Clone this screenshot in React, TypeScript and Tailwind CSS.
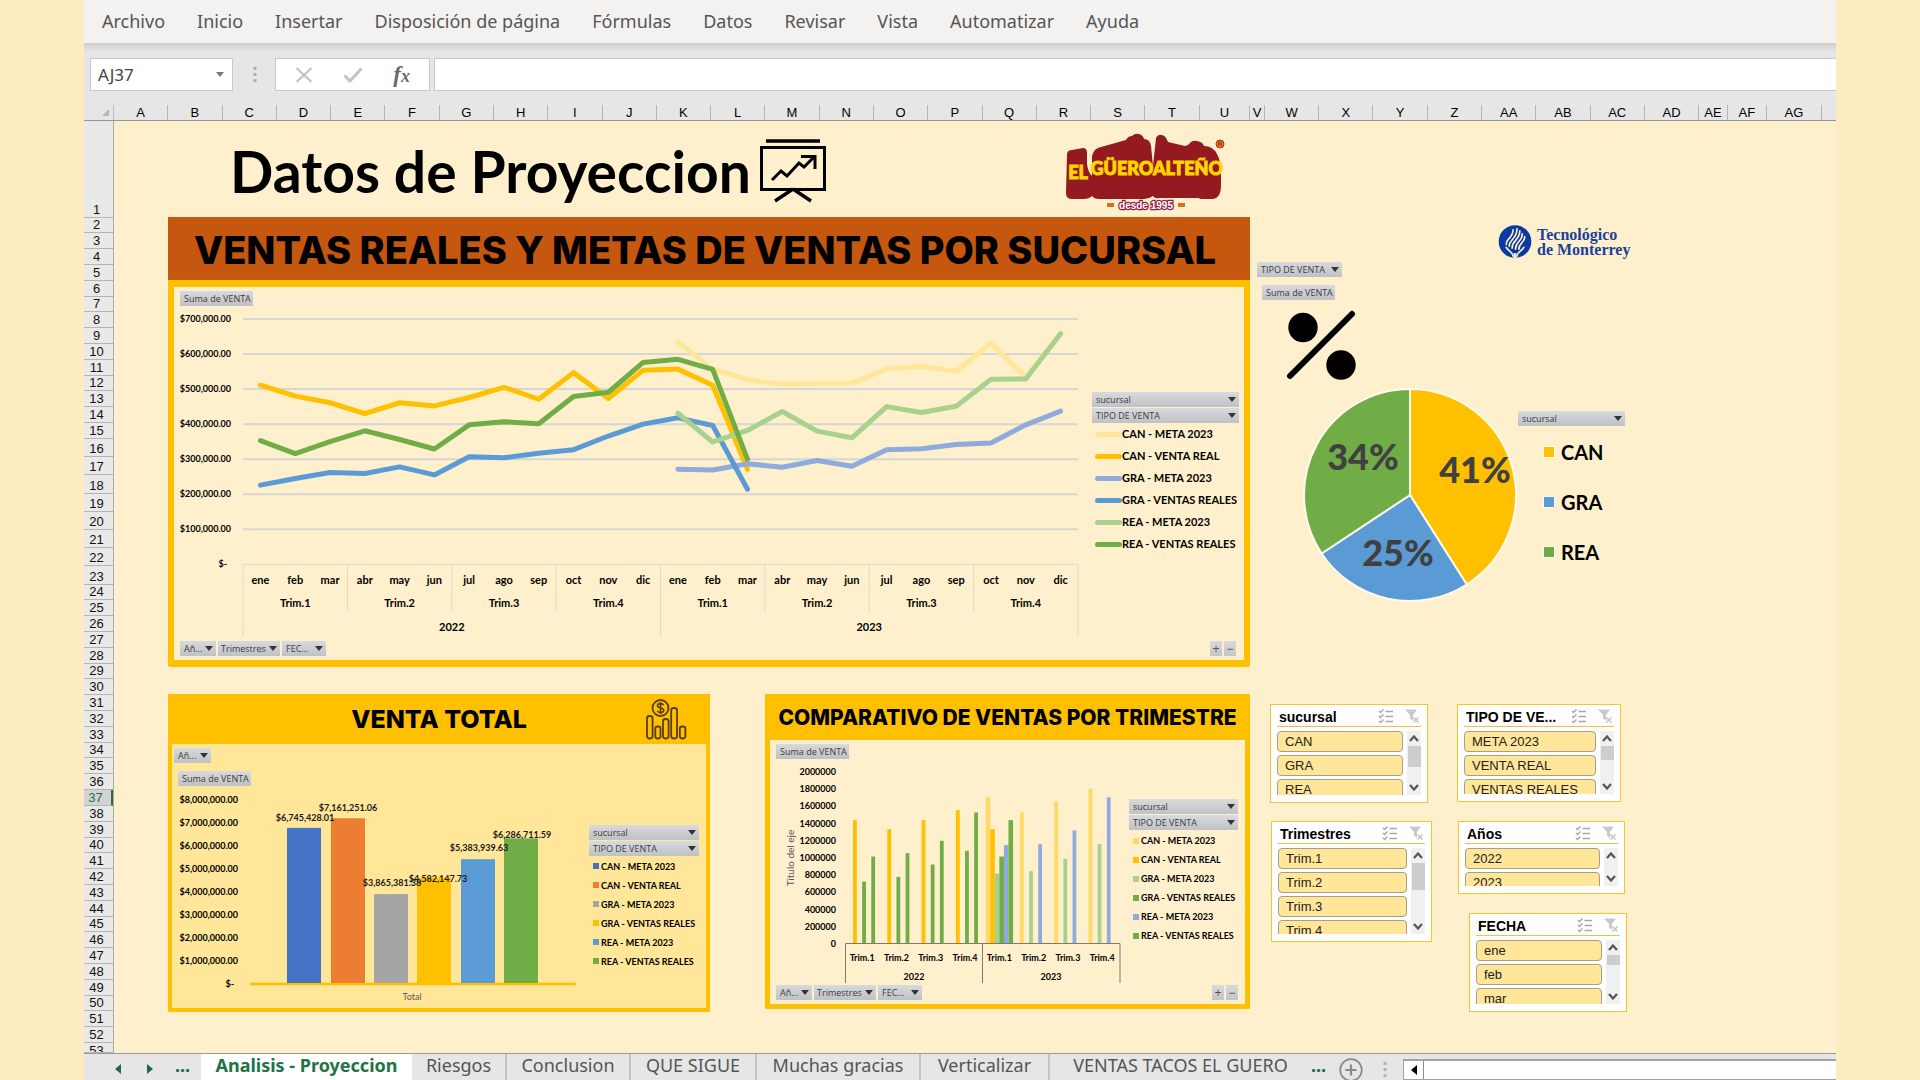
import React from "react";

const LATO = "font-['Lato','Open_Sans',sans-serif]";
const NOTO = "font-['Noto_Sans','Open_Sans',sans-serif]";
const ARIAL = "font-['Liberation_Sans',Arial,sans-serif]";
const HEAVY = "font-['Inter','Lato',sans-serif] font-extrabold";

const MENU = [
  "Archivo",
  "Inicio",
  "Insertar",
  "Disposición de página",
  "Fórmulas",
  "Datos",
  "Revisar",
  "Vista",
  "Automatizar",
  "Ayuda",
];

const LETTERS = "ABCDEFGHIJKLMNOPQRST".split("");
const COLUMNS: { name: string; size: string }[] = [
  ...LETTERS.map((name) => ({ name, size: "grow-[533]" })),
  { name: "U", size: "grow-[498]" },
  { name: "V", size: "grow-[135]" },
  ...["W", "X", "Y", "Z", "AA", "AB", "AC", "AD"].map((name) => ({ name, size: "grow-[533]" })),
  { name: "AE", size: "grow-[275]" },
  { name: "AF", size: "grow-[386]" },
  { name: "AG", size: "grow-[535]" },
];

function rowSize(n: number) {
  if (n === 1) return "grow-[955]";
  if (n === 53) return "grow-[90]";
  if (n >= 16 && n <= 23) return "grow-[172]";
  return "grow-[148]";
}

/* ---------- small shared parts ---------- */

function Caret({ className = "" }: { className?: string }) {
  return (
    <svg viewBox="0 0 8 5" className={`h-[5px] w-2 shrink-0 ${className}`} aria-hidden="true">
      <path d="M0 0h8L4 5z" fill="#333" />
    </svg>
  );
}

function FieldButton({ label, arrow = false, className = "" }: { label: string; arrow?: boolean; className?: string }) {
  return (
    <button
      type="button"
      className={`flex h-[15px] shrink-0 items-center justify-between bg-linear-to-b from-[#d9dade] to-[#bfc1c5] pr-[3px] pl-1 font-['Open_Sans','Noto_Sans',sans-serif] text-[9px] leading-none whitespace-nowrap text-[#3c3c3c] ${className}`}
    >
      <span>{label}</span>
      {arrow && <Caret />}
    </button>
  );
}

function ExpandButtons() {
  return (
    <div className="flex gap-[2px]">
      {["+", "−"].map((s) => (
        <button
          key={s}
          type="button"
          aria-label={s === "+" ? "Expandir campo" : "Contraer campo"}
          className={`flex h-[15px] w-3 items-center justify-center bg-linear-to-b from-[#d9dade] to-[#c3c5c9] text-[12px] leading-none text-[#555] ${ARIAL}`}
        >
          {s}
        </button>
      ))}
    </div>
  );
}

function AxisButtons() {
  return (
    <div className="flex gap-[2px]">
      <FieldButton label="Añ..." arrow className="w-[36px]" />
      <FieldButton label="Trimestres" arrow className="w-[62px] pl-[3px]" />
      <FieldButton label="FEC..." arrow className="w-[44px]" />
    </div>
  );
}

const SERIES = [
  "CAN - META 2023",
  "CAN - VENTA REAL",
  "GRA - META 2023",
  "GRA - VENTAS REALES",
  "REA - META 2023",
  "REA - VENTAS REALES",
];

function SquareLegend({ colors }: { colors: string[] }) {
  return (
    <div className="flex w-full flex-col gap-px">
      <FieldButton label="sucursal" arrow className="w-full" />
      <FieldButton label="TIPO DE VENTA" arrow className="w-full" />
      <ul className="pl-1">
        {SERIES.map((s, i) => (
          <li key={s} className={`flex h-[19px] items-center gap-[2px] text-[9px] font-bold whitespace-nowrap ${LATO}`}>
            <span className="size-[6px] shrink-0" style={{ backgroundColor: colors[i] }} />
            {s}
          </li>
        ))}
      </ul>
    </div>
  );
}

/* ---------- line chart ---------- */

const MONTHS = ["ene", "feb", "mar", "abr", "may", "jun", "jul", "ago", "sep", "oct", "nov", "dic"];

const LINES: { color: string; start: number; values: number[] }[] = [
  { color: "#ffe699", start: 12, values: [635, 557, 527, 513, 517, 517, 557, 565, 551, 631, 534, 658] },
  { color: "#ffc000", start: 0, values: [511, 480, 461, 430, 461, 452, 476, 505, 471, 547, 473, 554, 557, 511, 271] },
  { color: "#8faadc", start: 12, values: [271, 269, 287, 277, 296, 280, 327, 330, 342, 346, 398, 437] },
  { color: "#5b9bd5", start: 0, values: [226, 245, 262, 259, 278, 255, 307, 304, 317, 327, 366, 400, 418, 396, 214] },
  { color: "#a9d18e", start: 12, values: [431, 349, 382, 436, 380, 361, 450, 433, 451, 528, 529, 658] },
  { color: "#70ad47", start: 0, values: [353, 316, 350, 381, 356, 329, 398, 407, 401, 479, 491, 576, 585, 556, 300] },
];

function LineChart() {
  const left = 243;
  const right = 1077;
  const base = 564;
  const step = (right - left) / 24;
  const x = (i: number) => left + step * (i + 0.5);
  const y = (v: number) => base - v * 0.35;
  return (
    <svg viewBox="180 307 906 333" className={`min-w-0 flex-1 ${LATO}`} role="img" aria-label="Ventas reales y metas por mes">
      {[100, 200, 300, 400, 500, 600, 700].map((v) => (
        <g key={v}>
          <line x1={left} x2={right} y1={y(v)} y2={y(v)} stroke="#d6d6d6" strokeWidth="2" />
          <text x="231" y={y(v) + 3} textAnchor="end" fontSize="9" fontWeight="700">{`$${v},000.00`}</text>
        </g>
      ))}
      <text x="227" y={base + 3} textAnchor="end" fontSize="9" fontWeight="700">
        $-
      </text>
      <line x1={left} x2={right} y1={base} y2={base} stroke="#dcd9cf" />
      {[0, 1, 2, 3, 4, 5, 6, 7, 8].map((q) => (
        <line
          key={q}
          x1={left + q * step * 3}
          x2={left + q * step * 3}
          y1={base}
          y2={q % 4 === 0 ? 636 : 611}
          stroke="#dcd9cf"
        />
      ))}
      <g fontSize="11" fontWeight="700" textAnchor="middle">
        {Array.from({ length: 24 }, (_, i) => (
          <text key={i} x={x(i)} y="584">
            {MONTHS[i % 12]}
          </text>
        ))}
        {Array.from({ length: 8 }, (_, q) => (
          <text key={q} x={left + step * (q * 3 + 1.5)} y="607">{`Trim.${(q % 4) + 1}`}</text>
        ))}
        <text x={left + step * 6} y="631">
          2022
        </text>
        <text x={left + step * 18} y="631">
          2023
        </text>
      </g>
      {LINES.map((l) => (
        <polyline
          key={l.color}
          points={l.values.map((v, i) => `${x(l.start + i)},${y(v)}`).join(" ")}
          fill="none"
          stroke={l.color}
          strokeWidth="5"
          strokeLinecap="round"
          strokeLinejoin="round"
        />
      ))}
    </svg>
  );
}

function LinePanel() {
  return (
    <section className="rounded-b-xs border-x-[6px] border-t-[7px] border-b-[7px] border-[#ffc000] bg-[#fff0cd]">
      <div className="flex flex-col gap-px pt-1 pr-[5px] pb-1 pl-[6px]">
        <FieldButton label="Suma de VENTA" className="w-[73px]" />
        <div className="flex items-center gap-[5px]">
          <LineChart />
          <div className="flex w-[147px] shrink-0 flex-col gap-px">
            <FieldButton label="sucursal" arrow className="w-full" />
            <FieldButton label="TIPO DE VENTA" arrow className="w-full" />
            <ul className="pl-[3px]">
              {SERIES.map((s, i) => (
                <li key={s} className={`flex h-[22px] items-center text-[11px] font-bold whitespace-nowrap ${LATO}`}>
                  <span className="h-[5px] w-[27px] shrink-0 rounded-full" style={{ backgroundColor: LINES[i].color }} />
                  {s}
                </li>
              ))}
            </ul>
          </div>
        </div>
        <div className="flex justify-between pr-[3px]">
          <AxisButtons />
          <ExpandButtons />
        </div>
      </div>
    </section>
  );
}

/* ---------- total bars ---------- */

const TOTALS = [
  { x: 287, value: 6.745, label: "$6,745,428.01", lx: 305, ly: 821, color: "#4472c4" },
  { x: 331, value: 7.161, label: "$7,161,251.06", lx: 348, ly: 811, color: "#ed7d31" },
  { x: 374, value: 3.865, label: "$3,865,381.38", lx: 392, ly: 886, color: "#a5a5a5" },
  { x: 417, value: 4.582, label: "$4,582,147.73", lx: 438, ly: 882, color: "#ffc000" },
  { x: 461, value: 5.384, label: "$5,383,939.63", lx: 479, ly: 851, color: "#5b9bd5" },
  { x: 504, value: 6.287, label: "$6,286,711.59", lx: 522, ly: 838, color: "#70ad47" },
];

function CoinChartIcon() {
  return (
    <svg viewBox="0 0 41 41" className="h-[41px] w-[41px]" fill="none" stroke="#5a3d00" strokeWidth="1.8" aria-hidden="true">
      <circle cx="14.5" cy="9" r="8" />
      <path d="M17.6 6.2c-.6-1.1-1.7-1.6-3.1-1.6-1.8 0-3 .8-3 2.2 0 3 6.2 1.3 6.2 4.4 0 1.5-1.3 2.3-3.1 2.3-1.6 0-2.8-.6-3.3-1.8M14.5 3v12" strokeWidth="1.6" />
      <rect x="1" y="17" width="5.6" height="22.5" rx="2.4" />
      <rect x="9.3" y="27.5" width="5.2" height="12" rx="2.2" />
      <rect x="17" y="20" width="5.6" height="19.5" rx="2.4" />
      <rect x="25.2" y="9" width="5.8" height="30.5" rx="2.4" />
      <rect x="33.8" y="27.5" width="5.6" height="12" rx="2.4" />
    </svg>
  );
}

function TotalPanel() {
  const base = 984;
  return (
    <section className="grow-[534] basis-0 rounded-b-xs border-4 border-t-0 border-[#ffc000] bg-[#ffe699]">
      <header className="grid h-[50px] grid-cols-[1fr_auto_1fr] items-center bg-[#ffc000]">
        <h2 className={`col-start-2 text-[25px] leading-none ${HEAVY}`}>VENTA TOTAL</h2>
        <div className="flex justify-end pr-[19px]">
          <CoinChartIcon />
        </div>
      </header>
      <div className="flex flex-col pt-1 pb-[2px]">
        <FieldButton label="Añ..." arrow className="ml-[2px] w-[37px]" />
        <FieldButton label="Suma de VENTA" className="mt-2 ml-[6px] w-[73px]" />
        <div className="mt-px flex items-center gap-[5px] pr-[7px] pl-1">
          <svg viewBox="176 787 408 219" className={`min-w-0 flex-1 ${LATO}`} role="img" aria-label="Venta total por serie">
            <g fontSize="9" fontWeight="700">
              {[1, 2, 3, 4, 5, 6, 7, 8].map((v) => (
                <text key={v} x="238" y={base + 3 - v * 23} textAnchor="end">{`$${v},000,000.00`}</text>
              ))}
              <text x="234" y={base + 3} textAnchor="end">
                $-
              </text>
            </g>
            <line x1="250" x2="575.5" y1="984" y2="984" stroke="#ffc000" strokeWidth="2.4" />
            {TOTALS.map((t) => (
              <rect key={t.x} x={t.x} y={base - 1 - t.value * 23} width="34" height={t.value * 23} fill={t.color} />
            ))}
            <g fontSize="9" fontWeight="700" textAnchor="middle" fill="#1a1a1a">
              {TOTALS.map((t) => (
                <text key={t.label} x={t.lx} y={t.ly}>
                  {t.label}
                </text>
              ))}
            </g>
            <text x="412" y="1000" textAnchor="middle" fontSize="9" fill="#595959">
              Total
            </text>
          </svg>
          <div className="mt-[2px] w-[110px] shrink-0">
            <SquareLegend colors={TOTALS.map((t) => t.color)} />
          </div>
        </div>
      </div>
    </section>
  );
}

/* ---------- quarterly comparison ---------- */

const QUARTER_COLORS = ["#ffd966", "#ffc000", "#a9d18e", "#70ad47", "#8faadc", "#70ad47"];
const QUARTERS: number[][] = [
  [0, 1449, 0, 730, 0, 1023],
  [0, 1344, 0, 785, 0, 1063],
  [0, 1449, 0, 930, 0, 1207],
  [0, 1566, 0, 1090, 0, 1539],
  [1715, 1344, 824, 1023, 1156, 1449],
  [1539, 0, 852, 0, 1168, 0],
  [1668, 0, 996, 0, 1328, 0],
  [1816, 0, 1168, 0, 1715, 0],
];

function QuarterPanel() {
  const base = 943;
  const left = 845;
  const pitch = 34.3;
  const bar = 4.57;
  return (
    <section className="grow-[475] basis-0 rounded-b-xs border-[5px] border-t-0 border-[#ffc000] bg-[#fff0cd]">
      <header className="flex h-[46px] items-center justify-center bg-[#ffc000]">
        <h2 className={`pt-px text-[21px] leading-none whitespace-nowrap ${HEAVY}`}>COMPARATIVO DE VENTAS POR TRIMESTRE</h2>
      </header>
      <div className="flex flex-col gap-px pt-1 pr-[7px] pb-1 pl-[6px]">
        <FieldButton label="Suma de VENTA" className="w-[73px]" />
        <div className="flex items-center gap-[5px]">
          <svg viewBox="776 759 348 224" className={`min-w-0 flex-1 ${LATO}`} role="img" aria-label="Comparativo por trimestre">
            <g fontSize="9" fontWeight="700" textAnchor="end">
              {Array.from({ length: 11 }, (_, i) => (
                <text key={i} x="836" y={base + 3 - i * 17.2}>
                  {i * 200000}
                </text>
              ))}
            </g>
            <text transform="translate(793.5 857) rotate(-90)" textAnchor="middle" fontSize="10" fill="#595959">
              Título del eje
            </text>
            {QUARTERS.map((q, i) =>
              q.map((v, j) =>
                v ? (
                  <rect
                    key={`${i}-${j}`}
                    x={left + pitch * (i + 0.5) + (j - 3) * bar}
                    y={base - v * 0.0855}
                    width={i === 4 ? 4.6 : 3.8}
                    height={v * 0.0855}
                    fill={QUARTER_COLORS[j]}
                  />
                ) : null,
              ),
            )}
            <path d="M845.5 982V942.5H1120V982M982.5 942.5V982" fill="none" stroke="#7f7a6c" />
            <g fontSize="9" fontWeight="700" textAnchor="middle">
              {QUARTERS.map((_, i) => (
                <text key={i} x={left + pitch * (i + 0.5)} y="960">{`Trim.${(i % 4) + 1}`}</text>
              ))}
              <text x="914" y="979">
                2022
              </text>
              <text x="1051" y="979">
                2023
              </text>
            </g>
          </svg>
          <div className="w-[109px] shrink-0">
            <SquareLegend colors={QUARTER_COLORS} />
          </div>
        </div>
        <div className="flex justify-between">
          <AxisButtons />
          <ExpandButtons />
        </div>
      </div>
    </section>
  );
}

/* ---------- logos and title ---------- */

function BoardIcon() {
  return (
    <svg viewBox="0 0 66 64" className="h-16 w-[66px] shrink-0" fill="none" stroke="#000" aria-hidden="true">
      <path d="M6 2h54" strokeWidth="3.400" />
      <rect x="1.5" y="8.5" width="63" height="42" strokeWidth="3" />
      <path d="M12 41l9-9 6 5 12-13 5 4 11-11" strokeWidth="3" />
      <path d="M41 17.5h14V30" strokeWidth="3" />
      <path d="M33 50L15 62M33 50l18 12" strokeWidth="3.4" />
    </svg>
  );
}

function GueroLogo() {
  return (
    <svg viewBox="0 0 160 80" className="h-20 w-40 shrink-0" role="img" aria-label="El Güero Alteño desde 1995">
      <path
        d="M2 22q0-5 5-5l11-2q4 0 4 5v11q1 8 5 12V23q2-8 9-9l25-7q2-4 6-4 3-3 7-2 4 1 5 5 6 0 7 7l2 20 3-28q2-4 6-3t6 7l17 4q3 0 5-3t7-2q6 1 7 5 9 0 13 8 4 7 4 19v13q0 12-8 13h-11q-3 0-3-1H94q-4 1-6-2-4 3-9 3H34q-5 0-7-3-3 3-8 3H7q-6 0-6-6z"
        fill="#931a20"
      />
      <g
        fontFamily="Lato, 'Open Sans', sans-serif"
        fontWeight="900"
        fill="#ffd500"
        stroke="#ffd500"
        strokeWidth="1"
        textAnchor="middle"
      >
        <text x="13" y="46" fontSize="18">EL</text>
        <text x="57" y="42" fontSize="18">GÜERO</text>
        <text x="123" y="42" fontSize="18">ALTEÑO</text>
      </g>
      <circle cx="155" cy="11" r="4" fill="#e87b1a" stroke="#a33a12" />
      <path d="M153.500 13V9h2q1 0 1 1t-1 1h-2M155.500 11l1.200 2" fill="none" stroke="#931a20" strokeWidth=".8" />
      <rect x="42" y="70" width="7" height="4" fill="#d9701c" />
      <rect x="113" y="70" width="7" height="4" fill="#d9701c" />
      <text
        x="81"
        y="76"
        fontSize="10"
        fontWeight="700"
        textAnchor="middle"
        fontFamily="Liberation Sans"
        fill="#fff"
        stroke="#931a40"
        strokeWidth="2.4"
        paintOrder="stroke"
      >
        desde 1995
      </text>
    </svg>
  );
}

function TecLogo() {
  return (
    <div className="flex items-center gap-[5px]">
      <svg viewBox="0 0 34 34" className="h-[33px] w-[34px] shrink-0" aria-hidden="true">
        <ellipse cx="17" cy="17" rx="16.8" ry="16.8" fill="#0a3aa0" />
        <g fill="none" stroke="#fff0cd" strokeWidth="1.7" strokeLinecap="round">
          <path d="M8 20c0-7 7-6 7-15" />
          <path d="M11 22c0-8 8-7 8-18" />
          <path d="M14 24c0-9 8-8 8-18" />
          <path d="M17.5 25c0-9 7-7 7-16" />
          <path d="M21 25c0-7 6-6 6-13" />
          <path d="M8 23c2 4 6 4 7 9M26 23c-2 4-6 4-7 9" />
        </g>
        <path d="M15.500 29h3v6h-3z" fill="#fff0cd" />
      </svg>
      <p className="font-['Liberation_Serif',serif] text-[16px] leading-[15px] font-bold whitespace-nowrap text-[#1c3f9a]">
        Tecnológico
        <br />
        de Monterrey
      </p>
    </div>
  );
}

function PercentIcon() {
  return (
    <svg viewBox="0 0 72 72" className="h-[72px] w-[72px]" aria-hidden="true">
      <circle cx="17" cy="17.500" r="14.700" />
      <circle cx="55" cy="55" r="14.700" />
      <path d="M4 66L66 4" stroke="#000" strokeWidth="6" strokeLinecap="round" />
    </svg>
  );
}

/* ---------- pie ---------- */

function slice(from: number, to: number) {
  const p = (f: number) => {
    const a = f * 2 * Math.PI;
    return `${108 + 106 * Math.sin(a)} ${108 - 106 * Math.cos(a)}`;
  };
  return `M108 108L${p(from)}A106 106 0 0 1 ${p(to)}Z`;
}

function PieChart() {
  return (
    <svg viewBox="0 0 216 216" className={`size-[216px] shrink-0 ${LATO}`} role="img" aria-label="Porcentaje por sucursal">
      <g stroke="#fffaf0" strokeWidth="2" strokeLinejoin="round">
        <path d={slice(0, 0.41)} fill="#ffc000" />
        <path d={slice(0.41, 0.657)} fill="#5b9bd5" />
        <path d={slice(0.657, 1)} fill="#70ad47" />
      </g>
      <g fontSize="36" fontWeight="900" fill="#404040" textAnchor="middle">
        <text x="173" y="96">41%</text>
        <text x="61" y="83">34%</text>
        <text x="96" y="179">25%</text>
      </g>
    </svg>
  );
}

/* ---------- slicers ---------- */

function Chevron({ up = false }: { up?: boolean }) {
  return (
    <svg viewBox="0 0 10 7" className="h-[7px] w-[10px]" fill="none" stroke="#555" strokeWidth="2.200" aria-hidden="true">
      <path d={up ? "M1 6l4-4.500L9 6" : "M1 1l4 4.500L9 1"} />
    </svg>
  );
}

function Slicer({
  title,
  items,
  className,
  list,
  thumb,
}: {
  title: string;
  items: string[];
  className: string;
  list: string;
  thumb?: string;
}) {
  return (
    <section className={`border border-[#f9c42d] bg-white px-[6px] pt-[2px] pb-[7px] ${ARIAL} ${className}`} aria-label={title}>
      <header className="flex h-[20px] items-center border-b border-[#f3c044] pr-px pl-[2px]">
        <h3 className="grow text-[14px] leading-none font-bold whitespace-nowrap">{title}</h3>
        <button type="button" aria-label="Selección múltiple">
          <svg viewBox="0 0 16 15" className="h-[15px] w-4" fill="none" stroke="#a9a9a9" strokeWidth="1.500" aria-hidden="true">
            <path d="M1 2l1.500 1.500L5.500.5M1 7l1.500 1.500 3-3M1 12l1.500 1.500 3-3M7.500 2.500H15M7.500 7.500H15M7.500 12.500H15" />
          </svg>
        </button>
        <button type="button" aria-label="Borrar filtro" className="ml-[11px]">
          <svg viewBox="0 0 15 15" className="size-[15px]" aria-hidden="true">
            <path d="M0 .5h12L8 6v6L5 9.500V6z" fill="#c9c9c9" />
            <path d="M8.500 8.500l5 5M13.500 8.500l-5 5" stroke="#c4c4c4" strokeWidth="1.600" />
          </svg>
        </button>
      </header>
      <div className={`mt-1 flex gap-1 overflow-hidden ${list}`}>
        <ul className="flex min-w-0 grow flex-col gap-[3px]">
          {items.map((it) => (
            <li key={it} className="shrink-0">
              <button
                type="button"
                className="flex h-[21px] w-full items-center rounded-[4px] border border-[#a79f8a] bg-[#ffe699] pl-[7px] text-[13px] leading-none whitespace-nowrap text-[#222]"
              >
                {it}
              </button>
            </li>
          ))}
        </ul>
        <div className="flex w-[14px] shrink-0 flex-col items-center justify-between bg-[#f0f0f0]">
          <div className="flex w-full flex-col items-center">
            <div className="flex h-[15px] items-center">
              <Chevron up />
            </div>
            {thumb && <div className={`w-[13px] bg-[#cdcdcd] ${thumb}`} />}
          </div>
          <div className="flex h-4 items-center">
            <Chevron />
          </div>
        </div>
      </div>
    </section>
  );
}

function Slicers() {
  return (
    <div className="flex items-start">
      <div className="flex w-[187px] flex-col gap-[18px]">
        <Slicer title="sucursal" items={["CAN", "GRA", "REA"]} className="w-[158px]" list="h-[64px]" thumb="h-[21px]" />
        <Slicer
          title="Trimestres"
          items={["Trim.1", "Trim.2", "Trim.3", "Trim.4"]}
          className="ml-px w-[161px]"
          list="h-[86px]"
          thumb="h-[27px]"
        />
      </div>
      <div className="flex flex-col gap-[19px]">
        <Slicer
          title="TIPO DE VE..."
          items={["META 2023", "VENTA REAL", "VENTAS REALES"]}
          className="w-[164px]"
          list="h-[63px]"
          thumb="h-[14px]"
        />
        <Slicer title="Años" items={["2022", "2023"]} className="ml-px w-[167px]" list="h-[38px]" />
        <Slicer title="FECHA" items={["ene", "feb", "mar"]} className="ml-3 w-[158px]" list="h-[64px]" thumb="h-[10px]" />
      </div>
    </div>
  );
}

function RightSide() {
  return (
    <aside className="min-w-0">
      <div className="pt-[104px] pl-[248px]">
        <TecLogo />
      </div>
      <FieldButton label="TIPO DE VENTA" arrow className="mt-1 ml-[7px] w-[85px]" />
      <FieldButton label="Suma de VENTA" className="mt-2 ml-3 w-[73px]" />
      <div className="mt-[10px] ml-9">
        <PercentIcon />
      </div>
      <div className="mt-[5px] ml-[52px] flex">
        <PieChart />
        <div className="mt-6 w-[107px]">
          <FieldButton label="sucursal" arrow className="w-full" />
          <ul className={`ml-[25px] pt-px text-[20px] font-bold ${LATO}`}>
            {[
              ["CAN", "bg-[#ffc000]"],
              ["GRA", "bg-[#5b9bd5]"],
              ["REA", "bg-[#70ad47]"],
            ].map(([name, bg]) => (
              <li key={name} className="flex h-[50px] items-center gap-[6px]">
                <span className={`size-3 border border-[#fffaf0] ${bg}`} />
                {name}
              </li>
            ))}
          </ul>
        </div>
      </div>
      <div className="mt-[101px] ml-5">
        <Slicers />
      </div>
    </aside>
  );
}

/* ---------- window chrome ---------- */

function FormulaBar() {
  return (
    <div className="flex h-[62px] shrink-0 items-start bg-linear-to-b from-[#cfcfcd] via-[#e6e6e6] via-15% to-[#e6e6e6] pt-[15px] pl-[6px]">
      <div className="flex h-[33px] w-[143px] items-center border border-[#c8c8c8] bg-white pr-2">
        <input
          aria-label="Cuadro de nombres"
          defaultValue="AJ37"
          className={`min-w-0 grow bg-transparent pl-[7px] text-[17px] text-[#444] outline-none ${NOTO}`}
        />
        <button type="button" aria-label="Lista de nombres">
          <svg viewBox="0 0 8 5" className="h-[5px] w-2" aria-hidden="true">
            <path d="M0 0h8L4 5z" fill="#777" />
          </svg>
        </button>
      </div>
      <svg viewBox="0 0 4 18" className="mt-2 ml-5 h-[17px] w-1" fill="#a8a8a8" aria-hidden="true">
        <rect width="3" height="3" x=".5" y="1" />
        <rect width="3" height="3" x=".5" y="7.500" />
        <rect width="3" height="3" x=".5" y="14" />
      </svg>
      <div className="ml-[18px] flex h-[33px] w-[155px] items-center justify-around border border-[#c8c8c8] bg-white px-1">
        <button type="button" aria-label="Cancelar">
          <svg viewBox="0 0 18 16" className="h-4 w-[18px]" stroke="#c3c3c3" strokeWidth="2.200" aria-hidden="true">
            <path d="M1.500 1l15 14M16.500 1l-15 14" />
          </svg>
        </button>
        <button type="button" aria-label="Introducir">
          <svg viewBox="0 0 20 16" className="h-4 w-5" fill="none" stroke="#c3c3c3" strokeWidth="3" aria-hidden="true">
            <path d="M1.500 8.500l5.500 5.500L18.500 1.500" />
          </svg>
        </button>
        <button
          type="button"
          aria-label="Insertar función"
          className="flex items-baseline font-['Liberation_Serif',serif] text-[23px] leading-none font-bold text-[#6a6a6a] italic"
        >
          f<span className="text-[18px]">x</span>
        </button>
      </div>
      <input aria-label="Barra de fórmulas" className="ml-1 h-[33px] min-w-0 grow border border-r-0 border-[#c8c8c8] bg-white outline-none" />
    </div>
  );
}

const TABS = [
  { name: "Riesgos", width: "w-[95px]" },
  { name: "Conclusion", width: "w-[124px]" },
  { name: "QUE SIGUE", width: "w-[126px]" },
  { name: "Muchas gracias", width: "w-[164px]" },
  { name: "Verticalizar", width: "w-[129px]" },
];

function TabBar() {
  return (
    <footer className={`flex h-[27px] shrink-0 overflow-hidden border-t border-[#9a9a94] bg-[#e6e6e6] text-[18px] text-[#555] ${NOTO}`}>
      <div className="flex w-[117px] items-center pt-1 pl-[31px] text-[#1e6b41]">
        <button type="button" aria-label="Hoja anterior">
          <svg viewBox="0 0 6 10" className="h-[10px] w-[6px]" fill="#1e6b41" aria-hidden="true">
            <path d="M6 0v10L0 5z" />
          </svg>
        </button>
        <button type="button" aria-label="Hoja siguiente" className="ml-[26px]">
          <svg viewBox="0 0 6 10" className="h-[10px] w-[6px]" fill="#1e6b41" aria-hidden="true">
            <path d="M0 0v10l6-5z" />
          </svg>
        </button>
        <span className="ml-[22px] pb-2 leading-none font-bold">...</span>
      </div>
      <button type="button" className="-mt-px h-[27px] w-[211px] bg-white pb-[3px] text-[18px] leading-none font-bold whitespace-nowrap text-[#217346]">
        Analisis - Proyeccion
      </button>
      {TABS.map((t) => (
        <button key={t.name} type="button" className={`flex h-full items-center justify-center border-r-2 border-[#c3c3c3] pb-[5px] leading-none whitespace-nowrap ${t.width}`}>
          {t.name}
        </button>
      ))}
      <button type="button" className="flex h-full w-[261px] items-center justify-center pb-[5px] leading-none whitespace-nowrap">
        VENTAS TACOS EL GUERO
      </button>
      <span className="w-[16px] leading-[22px] font-bold text-[#1e6b41]">...</span>
      <button type="button" aria-label="Hoja nueva" className="ml-3">
        <svg viewBox="0 0 24 24" className="mt-1 size-6" fill="none" stroke="#8a8a8a" strokeWidth="1.700" aria-hidden="true">
          <circle cx="12" cy="12" r="10.800" />
          <path d="M12 6.500v11M6.500 12h11" strokeWidth="2.200" />
        </svg>
      </button>
      <svg viewBox="0 0 4 18" className="mt-[7px] ml-5 h-[17px] w-1 shrink-0" fill="#b0b0b0" aria-hidden="true">
        <rect width="3" height="3" x=".5" y="1" />
        <rect width="3" height="3" x=".5" y="7.500" />
        <rect width="3" height="3" x=".5" y="14" />
      </svg>
      <div className="mt-[5px] ml-4 flex h-[21px] grow border border-t-2 border-r-0 border-[#a3a3a3] bg-white">
        <button type="button" aria-label="Desplazar a la izquierda" className="flex w-[20px] items-center justify-center border-r border-[#8c8c8c]">
          <svg viewBox="0 0 6 10" className="h-[10px] w-[6px]" aria-hidden="true">
            <path d="M6 0v10L0 5z" />
          </svg>
        </button>
      </div>
    </footer>
  );
}

function Sheet() {
  return (
    <div className="flex min-h-0 grow flex-col">
      <div className={`flex h-4 shrink-0 border-b border-[#98978f] bg-[#e6e6e6] text-[13px] leading-none ${ARIAL}`}>
        <div className="flex w-[30px] shrink-0 items-end justify-end border-r border-[#bdbdbd] pr-1 pb-1">
          <svg viewBox="0 0 8 8" className="size-[7px]" fill="#b5b5b5" aria-hidden="true">
            <path d="M8 0v8H0z" />
          </svg>
        </div>
        {COLUMNS.map((c) => (
          <div key={c.name} className={`flex min-w-0 basis-0 items-center justify-center border-r border-[#b5b5b5] ${c.size}`}>
            {c.name}
          </div>
        ))}
        <div className="grow-[145] basis-0" />
      </div>
      <div className="flex min-h-0 grow bg-[#fff0cd]">
        <div className={`flex w-[30px] shrink-0 flex-col overflow-hidden border-r border-[#a9a9a9] bg-[#e9e9e8] text-[13px] leading-[15px] ${ARIAL}`}>
          {Array.from({ length: 53 }, (_, i) => i + 1).map((n) => (
            <div
              key={n}
              className={`flex min-h-0 basis-0 justify-center overflow-hidden border-b pr-1 ${rowSize(n)} ${
                n === 37 ? "border-r-2 border-[#b5b5b5] border-r-[#217346] bg-[#d3d3d3] text-[#217346]" : "border-[#b5b5b5] text-[#111]"
              } ${n === 53 ? "items-start" : "items-end"}`}
            >
              {n}
            </div>
          ))}
        </div>
        <main className="grid min-w-0 grow grid-cols-[54fr_1082fr_586fr]">
          <div />
          <div className="min-w-0">
            <div className="flex h-[96px] items-center pr-[25px] pl-[62px]">
              <h1 className={`pt-1 text-[57px] leading-none font-bold whitespace-nowrap ${LATO}`}>Datos de Proyeccion</h1>
              <div className="ml-[9px] pt-1">
                <BoardIcon />
              </div>
              <div className="ml-auto pt-2">
                <GueroLogo />
              </div>
            </div>
            <div className="flex h-[63px] items-center justify-center bg-[#c5570f] pt-[2px]">
              <h2 className={`pr-2 text-[38px] leading-none whitespace-nowrap ${HEAVY}`}>
                VENTAS REALES Y METAS DE VENTAS POR SUCURSAL
              </h2>
            </div>
            <LinePanel />
            <div className="mt-[27px] flex items-start gap-[55px]">
              <TotalPanel />
              <QuarterPanel />
            </div>
          </div>
          <RightSide />
        </main>
      </div>
    </div>
  );
}

export default function App() {
  return (
    <div className="flex min-h-screen bg-[#fdecc1] px-[84px] text-black">
      <div className="flex min-w-0 grow flex-col">
        <nav className={`flex h-[43px] shrink-0 items-center gap-8 bg-[#f3f2f1] pl-[18px] text-[18px] text-[#555] ${NOTO}`}>
          {MENU.map((m) => (
            <button key={m} type="button" className="whitespace-nowrap">
              {m}
            </button>
          ))}
        </nav>
        <FormulaBar />
        <Sheet />
        <TabBar />
      </div>
    </div>
  );
}
